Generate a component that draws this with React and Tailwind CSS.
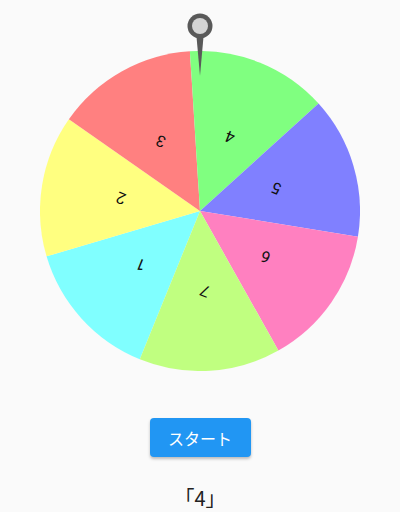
import React from 'react';

const labels = ['1', '2', '3', '4', '5', '6', '7'];
const colors = ['#80ffff', '#ffff80', '#ff8080', '#80ff80', '#8080ff', '#ff80c0', '#c0ff80'];
const ROT = 202.1; // 現在のホイール回転角
const R = 160;

const pt = (deg, r) => {
  const a = (deg * Math.PI) / 180;
  return [r * Math.sin(a), -r * Math.cos(a)];
};

const Wheel = () => {
  const step = 360 / labels.length;
  return (
    <svg width="320" height="320" viewBox="-160 -160 320 320" className="block">
      {labels.map((label, i) => {
        const start = ROT + i * step;
        const end = start + step;
        const [x1, y1] = pt(start, R);
        const [x2, y2] = pt(end, R);
        const [tx, ty] = pt(start + step / 2, 80);
        return (
          <g key={label}>
            <path d={`M0 0 L${x1} ${y1} A${R} ${R} 0 0 1 ${x2} ${y2} Z`} fill={colors[i]} />
            <text
              x={tx}
              y={ty}
              textAnchor="middle"
              dominantBaseline="central"
              fontSize="16"
              fill="#111"
              fontFamily="Roboto, sans-serif"
              transform={`rotate(${ROT} ${tx} ${ty})`}
            >
              {label}
            </text>
          </g>
        );
      })}
    </svg>
  );
};

const Pointer = () => (
  <svg width="26" height="66" viewBox="0 0 26 66" className="absolute left-1/2 -translate-x-1/2 -top-[38px]">
    <path d="M9 18 L17 18 L13 63 Z" fill="#595959" />
    <circle cx="13" cy="13" r="12.5" fill="#595959" />
    <circle cx="13" cy="13" r="8" fill="#d4d4d4" />
  </svg>
);

export default function App() {
  return (
    <div className="min-h-[512px] bg-[#fafafa] flex flex-col items-center font-['Roboto','Noto_Sans_CJK_JP',sans-serif]">
      <div className="relative mt-[51px] w-[320px] h-[320px]">
        <Wheel />
        <Pointer />
      </div>
      <button className="mt-[47px] w-[101px] h-[39px] rounded-[4px] bg-[#2196f3] text-white text-base font-['Noto_Sans_CJK_JP',sans-serif] shadow-[0_2px_3px_rgba(0,0,0,0.25)]">
        スタート
      </button>
      <div className="mt-[27px] text-xl leading-7 text-[#222] font-['Noto_Sans_CJK_JP',sans-serif]">「4」</div>
    </div>
  );
}
